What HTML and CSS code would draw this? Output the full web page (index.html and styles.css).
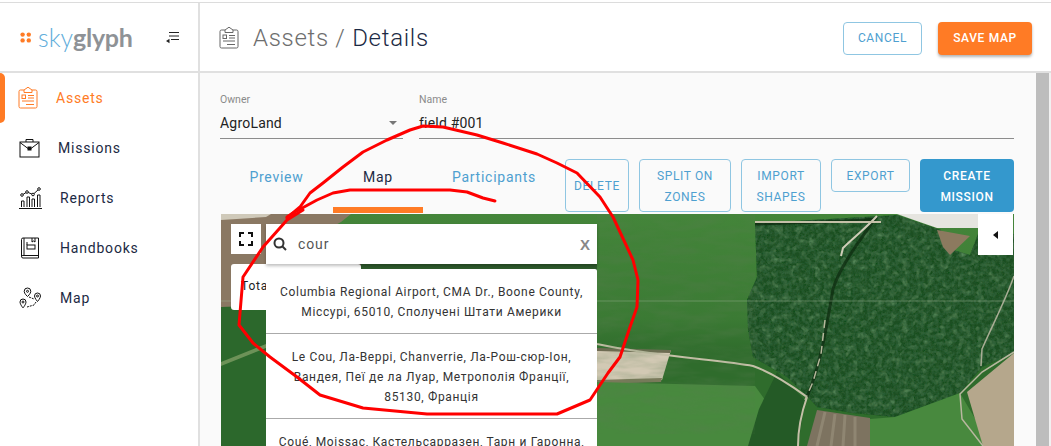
FILE: index.html
```html
<!DOCTYPE html>
<html lang="en">
<head>
<meta charset="utf-8">
<title>Assets / Details</title>
<link rel="stylesheet" href="styles.css">
</head>
<body>
<div class="app">
  <aside class="sidebar">
    <div class="brand">
      <div class="logo">
        <svg class="logo-dots" viewBox="0 0 11 11" width="11" height="11"><circle cx="2.600" cy="2.600" r="2.200"/><circle cx="8.800" cy="2.600" r="2.200"/><circle cx="2.600" cy="8.400" r="2.200"/><circle cx="8.800" cy="8.400" r="2.200"/></svg>
        <span class="logo-sky">sky</span><span class="logo-glyph">glyph</span>
      </div>
      <svg class="toggle" viewBox="0 0 14 13" width="14" height="13"><path d="M4 1.500h10M4 5h10M6 8.500h8" fill="none" stroke="#222" stroke-width="1"/><path d="M1 10l3.500-2.200v4.400z" fill="#222"/></svg>
    </div>
    <nav class="nav">
      <a class="nav-item active">
        <svg class="nav-icon icon-assets" viewBox="0 0 20 24" width="20" height="24" fill="none" stroke="currentColor" stroke-width="1"><path d="M6 4H2.500A1.500 1.500 0 0 0 1 5.500v15A1.500 1.500 0 0 0 2.500 22h15a1.500 1.500 0 0 0 1.500-1.500v-15A1.500 1.500 0 0 0 17.500 4H14"/><path d="M6 6.500V4l4-2.800L14 4v2.500z"/><rect x="4" y="9" width="3.500" height="3.500"/><path d="M10 9.500h6M10 12h6M4 15h12M8 18.500h8"/></svg>
        <span class="nav-label">Assets</span>
      </a>
      <a class="nav-item">
        <svg class="nav-icon icon-missions" viewBox="0 0 21 20" width="21" height="20" fill="none" stroke="#111" stroke-width="1"><rect x="1" y="4" width="19" height="15"/><path d="M7 4V1.500h7V4M1 4.500l8 6M20 4.500l-8 6"/><rect x="9" y="9" width="3" height="3" fill="#111"/></svg>
        <span class="nav-label">Missions</span>
      </a>
      <a class="nav-item">
        <svg class="nav-icon icon-reports" viewBox="0 0 23 22" width="23" height="22" fill="none" stroke="#111" stroke-width="1"><path d="M0 21.500h23"/><path d="M2.500 20v-6h2.500v6M8 20V10h2.500v10M13 20v-8h2.500v8M18.500 20V8H21v12"/><path d="M3 8l5-3 6 2.500L20 2"/><circle cx="3" cy="8" r="1.300" fill="#fff"/><circle cx="8" cy="5" r="1.300" fill="#fff"/><circle cx="14" cy="7.500" r="1.300" fill="#fff"/><circle cx="20" cy="2" r="1.300" fill="#fff"/></svg>
        <span class="nav-label">Reports</span>
      </a>
      <a class="nav-item">
        <svg class="nav-icon icon-books" viewBox="0 0 20 22" width="20" height="22" fill="none" stroke="#111" stroke-width="1"><path d="M3 1h15.500v20H3A1.500 1.500 0 0 1 1.500 19.500v-17A1.500 1.500 0 0 1 3 1zM4 1v17.500M1.500 19.500A1.500 1.500 0 0 1 3 18.500h15.500"/><rect x="7" y="8" width="8" height="4"/><path d="M12 1v4l1.500-1L15 5V1M7 5v3"/></svg>
        <span class="nav-label">Handbooks</span>
      </a>
      <a class="nav-item">
        <svg class="nav-icon icon-map" viewBox="0 0 23 22" width="23" height="22" fill="none" stroke="#111" stroke-width="1"><path d="M8.500 1a3.300 3.300 0 0 0-3.300 3.300c0 2.400 3.300 5.200 3.300 5.200s3.300-2.800 3.300-5.200A3.300 3.300 0 0 0 8.500 1zM18.500 6a3 3 0 0 0-3 3c0 2.200 3 5.500 3 5.500s3-3.300 3-5.500a3 3 0 0 0-3-3zM4 12a3 3 0 0 0-3 3c0 2.200 3 6 3 6s3-3.800 3-6a3 3 0 0 0-3-3z"/><circle cx="8.500" cy="4.300" r="1"/><circle cx="18.500" cy="9" r="1"/><circle cx="4" cy="15" r="1"/><path d="M10 10l5 2M17 15l-2 3-7 2" stroke-dasharray="2 1"/></svg>
        <span class="nav-label">Map</span>
      </a>
    </nav>
  </aside>

  <div class="main">
    <header class="header">
      <svg class="header-icon" viewBox="0 0 20 24" width="20" height="24" fill="none" stroke="#666" stroke-width="1"><path d="M6 4H2.500A1.500 1.500 0 0 0 1 5.500v15A1.500 1.500 0 0 0 2.500 22h15a1.500 1.500 0 0 0 1.500-1.500v-15A1.500 1.500 0 0 0 17.500 4H14"/><path d="M6 6.500V4l4-2.800L14 4v2.500z"/><rect x="4" y="9" width="3.500" height="3.500"/><path d="M10 9.500h6M10 12h6M4 15h12M8 18.500h8"/></svg>
      <h1 class="title"><span class="crumb">Assets / </span><span class="current">Details</span></h1>
      <div class="header-actions">
        <button class="btn btn-outline btn-cancel">CANCEL</button>
        <button class="btn btn-save">SAVE MAP</button>
      </div>
    </header>

    <div class="body">
      <section class="content">
        <div class="fields">
          <div class="field field-owner">
            <label class="field-label">Owner</label>
            <div class="field-value">AgroLand<span class="caret"></span></div>
          </div>
          <div class="field field-name">
            <label class="field-label">Name</label>
            <div class="field-value">field #001</div>
          </div>
        </div>

        <div class="toolbar">
          <div class="tabs">
            <a class="tab tab-preview">Preview</a>
            <a class="tab tab-map selected">Map</a>
            <a class="tab tab-part">Participants</a>
          </div>
          <div class="actions">
            <button class="btn btn-outline btn-delete">DELETE</button>
            <button class="btn btn-outline btn-split">SPLIT ON ZONES</button>
            <button class="btn btn-outline btn-import">IMPORT SHAPES</button>
            <button class="btn btn-outline btn-export">EXPORT</button>
            <button class="btn btn-create">CREATE MISSION</button>
          </div>
        </div>

        <div class="map">
          <svg class="map-art" viewBox="0 0 793 232" width="793" height="232">
            <defs>
              <filter id="forest" x="0" y="0" width="100%" height="100%">
                <feTurbulence type="fractalNoise" baseFrequency="0.28" numOctaves="3" seed="4"/>
                <feColorMatrix result="dark" values="0 0 0 0 0.03 0 0 0 0 0.12 0 0 0 0 0.04 2.400 0 0 0 -0.800"/>
                <feComposite in="dark" in2="SourceGraphic" operator="in" result="n"/>
                <feTurbulence type="fractalNoise" baseFrequency="0.16" numOctaves="2" seed="11"/>
                <feColorMatrix result="light" values="0 0 0 0 0.17 0 0 0 0 0.40 0 0 0 0 0.18 0 1.400 0 0 -0.700"/>
                <feComposite in="light" in2="SourceGraphic" operator="in" result="l"/>
                <feMerge><feMergeNode in="SourceGraphic"/><feMergeNode in="l"/><feMergeNode in="n"/></feMerge>
              </filter>
              <filter id="grain" x="0" y="0" width="100%" height="100%">
                <feTurbulence type="fractalNoise" baseFrequency="0.03 0.12" numOctaves="3" seed="7"/>
                <feColorMatrix values="0 0 0 0 0.1 0 0 0 0 0.2 0 0 0 0 0.08 1.200 0 0 0 -0.420"/>
              </filter>
              <linearGradient id="field" x1="0" y1="0" x2="0" y2="1">
                <stop offset="0" stop-color="#44853a"/>
                <stop offset="0.45" stop-color="#3b7a34"/>
                <stop offset="0.6" stop-color="#2f6c2c"/>
                <stop offset="1" stop-color="#2f6c2c"/>
              </linearGradient>
            </defs>
            <rect width="793" height="232" fill="url(#field)"/>
            <polygon points="0,0 130,0 120,8 45,50 45,92 0,93" fill="#8a7863"/>
            <polygon points="0,0 50,0 45,3 0,6" fill="#cfc9b9"/>
            <polygon points="0,93 45,92 45,232 0,232" fill="#2c682c"/>
            <polygon points="0,148 45,130 45,134 0,152" fill="#6d9258"/>
            <polygon points="45,50 140,50 140,56 45,56" fill="#5e5141"/>
            <polygon points="140,50 376,50 376,56 140,56" fill="#2e5a2c"/>
            <polygon points="376,136 450,136 441,166 376,168" fill="#d2c9b4"/>
            <polygon points="376,134 450,136 449,139 376,137" fill="#6f6a52"/>
            <polygon points="376,166 441,164 440,168 376,170" fill="#7d7a5c"/>
            <polygon points="376,168 534,172 577,232 376,232" fill="#48893e"/>
            <polygon points="556,158 584,186 577,232 527,232 538,195" fill="#245a26"/>
            <polygon points="534,9 556,8 660,2 676,1 720,16 722,33 749,41 757,20 793,20 793,139 761,153 739,179 674,203 632,199 596,193 587,183 566,163 532,143 527,116 526,86 536,63" fill="#1d4f23" filter="url(#forest)"/>
            <polygon points="596,196 649,204 649,232 586,232" fill="#7d7360"/>
            <path d="M604,198 L596,232 M614,200 L610,232 M624,201 L622,232 M634,203 L634,232" stroke="#8f8672" stroke-width="3"/>
            <polygon points="649,205 674,203 739,179 770,232 649,232" fill="#48893e"/>
            <polygon points="793,139 746,178 762,232 793,232" fill="#b5a78c"/>
            <polygon points="676,0 757,0 757,14 716,14 690,5" fill="#e6e5e0"/>
            <polygon points="716,16 749,22 729,41 722,33" fill="#8c7a5f"/>
            <path d="M376,130 C430,142 500,146 532,152 C555,160 575,175 586,183 C580,200 577,215 577,232" fill="none" stroke="#c5c0a8" stroke-width="2"/>
            <path d="M534,10 C590,8 630,8 654,5 C640,25 620,50 612,75 C606,110 600,150 586,183" fill="none" stroke="#0e2c10" stroke-width="3" stroke-opacity="0.750"/>
            <path d="M656,2 C645,14 632,24 622,34 L620,42" fill="none" stroke="#cfcdb8" stroke-width="2"/>
            <path d="M604,106 L600,140 L592,168 L584,186" fill="none" stroke="#b6b89c" stroke-width="1.500" stroke-dasharray="8 5"/>
            <path d="M793,138 L761,158 L739,180 L741,205 L762,232" fill="none" stroke="#b9b7a0" stroke-width="1.500"/>
            <path d="M793,62 C785,85 772,110 761,135 L760,152" fill="none" stroke="#a9ad95" stroke-width="1.500"/>
            <path d="M0,87 H793" stroke="#9fb59a" stroke-opacity="0.450" stroke-width="1"/>
            <path d="M534,8 H660" stroke="#c5c0a8" stroke-width="2"/>
            <polygon points="376,0 534,0 534,220 376,220" filter="url(#grain)" opacity="0.500"/>
          </svg>

          <button class="map-fullscreen">
            <svg viewBox="0 0 14 14" width="14" height="14" fill="none" stroke="#111" stroke-width="2"><path d="M1 5V1h4M9 1h4v4M13 9v4H9M5 13H1V9"/></svg>
          </button>
          <div class="map-total">Total</div>
          <div class="search">
            <div class="search-box">
              <svg class="search-icon" viewBox="0 0 14 14" width="14" height="14" fill="none" stroke="#333" stroke-width="2"><circle cx="6" cy="6" r="4.500"/><path d="M9.500 9.500L13 13"/></svg>
              <span class="search-text">cour</span>
              <span class="search-clear">X</span>
            </div>
            <ul class="results">
              <li class="result">Columbia Regional Airport, CMA Dr., Boone County, Міссурі, 65010, Сполучені Штати Америки</li>
              <li class="result">Le Cou, Ла-Веррі, Chanverrie, Ла-Рош-сюр-Іон, Вандея, Пеї де ла Луар, Метрополія Франції, 85130, Франція</li>
              <li class="result">Coué, Moissac, Кастельсарразен, Тарн и Гаронна, Окситанія, Метрополія Франції, 82200, Франція</li>
            </ul>
          </div>
          <button class="map-collapse"><span class="tri"></span></button>
        </div>
      </section>
      <div class="scrollbar"></div>
    </div>
  </div>
</div>

<svg class="scribble" viewBox="0 0 1051 446" width="1051" height="446" fill="none" stroke="#f00" stroke-width="3" stroke-linejoin="round" stroke-linecap="round">
  <path d="M303,210 L287,220 L263,247 L243,277 L239,325 L253,343 L270,357 L297,377 L320,395 L363,408 L427,414 L557,414 L590,400 L608,373 L620,357 L630,327 L637,307 L638,280 L633,260 L620,232 L613,217 L600,197 L577,173 L557,163 L537,154 L503,143 L477,135 L443,127 L423,126 L410,130 L387,140 L363,152 L343,167 L323,183 L310,193 L300,207 L287,218"/>
  <path d="M287,217 L293,213 L317,200 L333,193 L350,190 L450,190 L467,192 L483,198 L495,201"/>
</svg>
</body>
</html>
```
FILE: styles.css
```css
* { box-sizing: border-box; }
html, body { margin: 0; height: 100%; overflow: hidden; background: #fff; }
body { font-family: Roboto, "Noto Sans", sans-serif; color: #222; position: relative; padding-top: 2px; }

.app { display: flex; height: 444px; border-top: 1px solid #dcdcdc; }

.sidebar { width: 200px; flex: none; background: #fff; border-right: 2px solid #e0e0e0; }
.brand { height: 70px; border-bottom: 2px solid #e0e0e0; display: flex; align-items: center; padding: 0 19px 0 20px; justify-content: space-between; }
.logo { display: flex; align-items: center; font-family: Lato, sans-serif; font-size: 25px; line-height: 1; }
.logo-dots { fill: #ff7b25; margin-right: 7px; }
.logo-sky { color: #62aedb; font-weight: 300; }
.logo-glyph { color: #8e9296; font-weight: 700; letter-spacing: -0.3px; }

.nav { display: flex; flex-direction: column; }
.nav-item { height: 50px; display: flex; align-items: center; padding-left: 18px; position: relative; color: #1c2a44; font-size: 14px; letter-spacing: 0.8px; }
.nav-item.active { color: #ff7b25; }
.nav-item.active::before { content: ""; position: absolute; left: 0; top: 0; width: 5px; height: 50px; background: #ff7b25; border-radius: 0 5px 5px 0; }
.nav-icon { flex: none; }
.icon-assets { margin-right: 18px; }
.icon-missions { margin-left: 1px; margin-right: 18px; }
.icon-reports { margin-left: 1px; margin-right: 18px; }
.icon-books { margin-left: 2px; margin-right: 20px; }
.icon-map { margin-left: 1px; margin-right: 18px; }

.main { flex: 1; min-width: 0; display: flex; flex-direction: column; }
.header { height: 70px; flex: none; background: #fff; border-bottom: 2px solid #e0e0e0; display: flex; align-items: center; padding: 2px 19px 0 19px; }
.header-icon { flex: none; margin-right: 14px; }
.title { margin: 0; font-size: 24px; font-weight: 300; letter-spacing: 0.7px; flex: 1; }
.crumb { color: #6e6e6e; }
.current { color: #1c2a44; }
.header-actions { display: flex; gap: 16px; margin-top: 1px; }

.btn { font-family: Roboto, sans-serif; font-size: 12px; letter-spacing: 0.65px; line-height: 21px; text-align: center; border-radius: 4px; padding: 0 8px; cursor: pointer; }
.btn-outline { background: transparent; border: 1px solid #8fc6e2; color: #4ea0d0; }
.btn-cancel { width: 79px; height: 33px; background: #fff; }
.btn-save { width: 94px; height: 33px; background: #ff7b25; color: #fff; border: 0; font-weight: 500; box-shadow: 0 2px 3px rgba(0,0,0,.3); }

.body { flex: 1; min-height: 0; display: flex; background: #fafafa; overflow: hidden; }
.content { flex: 1; min-width: 0; padding: 20px 22px 0 20px; }
.scrollbar { width: 15px; flex: none; background: linear-gradient(to right, #bdbdbd 13px, #f1f1f1 13px); }

.fields { display: flex; gap: 16px; height: 66px; }
.field { display: flex; flex-direction: column; border-bottom: 1px solid #8c8c8c; height: 46px; position: relative; }
.field-owner { width: 183px; }
.field-name { flex: 1; }
.field-label { font-size: 10.500px; line-height: 13px; color: #8a8a8a; }
.field-value { font-size: 14px; letter-spacing: 0.2px; line-height: 20px; margin-top: 7px; color: #222; position: relative; }
.caret { position: absolute; right: 6px; top: 8px; width: 0; height: 0; border-left: 4px solid transparent; border-right: 4px solid transparent; border-top: 4.500px solid #777; }

.toolbar { display: flex; justify-content: space-between; height: 55px; }
.tabs { display: flex; }
.tab { font-size: 14px; letter-spacing: 0.75px; color: #4ea0d0; text-align: center; padding-top: 10px; position: relative; height: 54px; }
.tab-preview { width: 113px; }
.tab-map { width: 90px; color: #1c2a44; }
.tab-part { width: 142px; }
.selected::after { content: ""; position: absolute; left: 0; right: 0; bottom: 0; height: 6px; background: #ff7b25; }

.actions { display: flex; gap: 10px; align-items: flex-start; }
.actions .btn { height: 53px; padding-top: 2px; }
.btn-delete { width: 64px; }
.btn-split { width: 92px; }
.btn-import { width: 80px; }
.actions .btn-export { width: 79px; height: 33px; }
.btn-create { width: 94px; background: #3498cd; color: #fff; border: 0; font-weight: 500; }

.map { position: relative; width: 793px; height: 232px; overflow: hidden; margin-left: 1px; }
.map-art { display: block; }
.map-fullscreen { position: absolute; left: 10px; top: 10px; width: 30px; height: 30px; background: #fff; border: 0; padding: 8px; display: flex; }
.map-total { position: absolute; left: 10px; top: 50px; width: 130px; height: 46px; background: #fff; border-radius: 3px; font-size: 12px; letter-spacing: 0.8px; padding: 15px 10px; color: #222; }
.search { position: absolute; left: 45px; top: 10px; width: 331px; }
.search-box { height: 40px; background: #fff; display: flex; align-items: center; padding: 0 7px; box-shadow: 0 2px 3px rgba(0,0,0,.25); }
.search-icon { flex: none; margin-right: 11px; }
.search-text { flex: 1; font-size: 14px; letter-spacing: 0.9px; color: #555; }
.search-clear { font-size: 15px; color: #888; font-family: "Liberation Sans", sans-serif; font-weight: 700; }
.results { list-style: none; margin: 5px 0 0; padding: 0; background: #fff; border-radius: 2px 2px 0 0; }
.result { font-size: 12px; line-height: 20px; letter-spacing: 0.66px; color: #333; text-align: center; padding: 13px 10px 11px; border-bottom: 1px solid #aaa; }
.map-collapse { position: absolute; right: 1px; top: 0; width: 35px; height: 41px; background: #fff; border: 0; padding: 0; display: flex; align-items: center; justify-content: center; }
.tri { display: block; width: 0; height: 0; border-top: 4px solid transparent; border-bottom: 4px solid transparent; border-right: 5px solid #111; }

.scribble { position: absolute; left: 0; top: 0; pointer-events: none; }
```
